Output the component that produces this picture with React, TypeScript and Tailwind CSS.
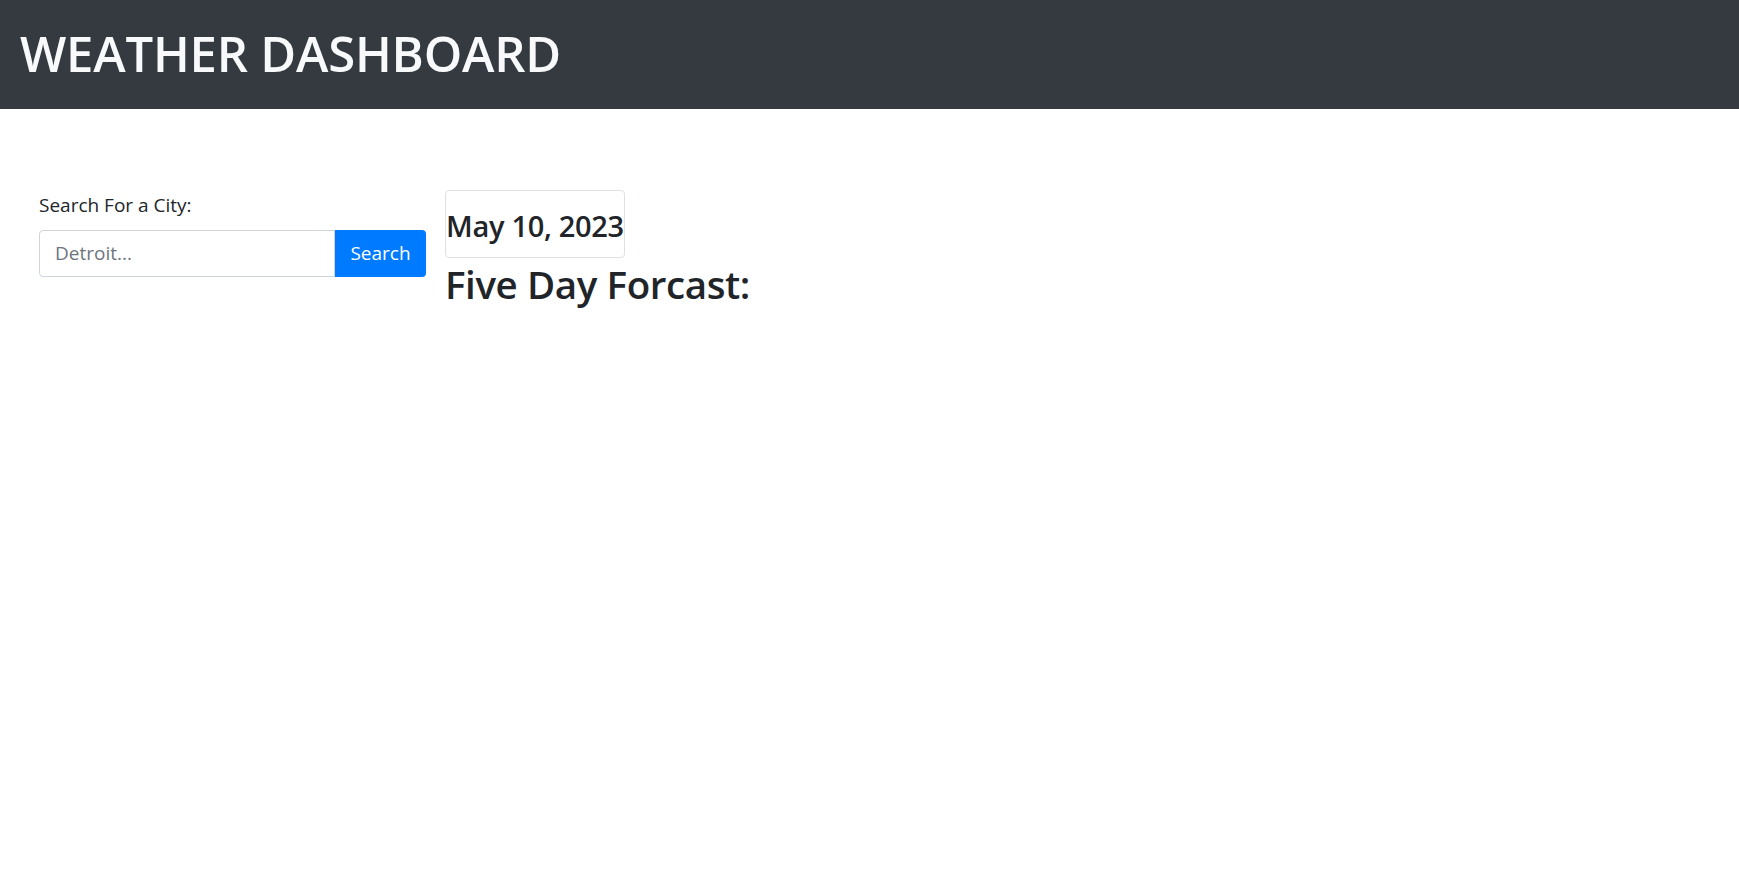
export default function App() {
  return (
    <div className="min-h-screen bg-white text-[#212529] font-['Open_Sans',sans-serif]">
      {/* Header */}
      <header className="h-[109px] bg-[#343a40] flex items-center px-[20px]">
        <h1 className="text-[49px] font-semibold text-[#f8f9fa] leading-none tracking-[-0.2px] mt-[-2px]">
          WEATHER DASHBOARD
        </h1>
      </header>

      <main className="flex gap-[19px] pl-[39px] pt-[81px]">
        {/* Search column */}
        <aside className="w-[387px] pt-[2px]">
          <label className="block text-[19px] leading-[26px] mb-[12px]">Search For a City:</label>
          <div className="flex h-[47px]">
            <input
              type="text"
              placeholder="Detroit..."
              className="flex-1 min-w-0 border border-[#ced4da] rounded-l-[4px] px-[15px] text-[19px] placeholder:text-[#6c757d] outline-none"
            />
            <button className="w-[91px] bg-[#007bff] text-white text-[19px] rounded-r-[4px]">Search</button>
          </div>
        </aside>

        {/* Forecast column */}
        <section className="flex flex-col items-start">
          <div className="border border-[#dee2e6] rounded-[4px] pt-[17px] pb-[13px]">
            <h3 className="text-[29px] font-semibold leading-[36px] tracking-[-0.3px]">May 10, 2023</h3>
          </div>
          <h2 className="text-[38.5px] font-semibold leading-[46px] mt-[3px] tracking-[-0.4px]">Five Day Forcast:</h2>
        </section>
      </main>
    </div>
  );
}
